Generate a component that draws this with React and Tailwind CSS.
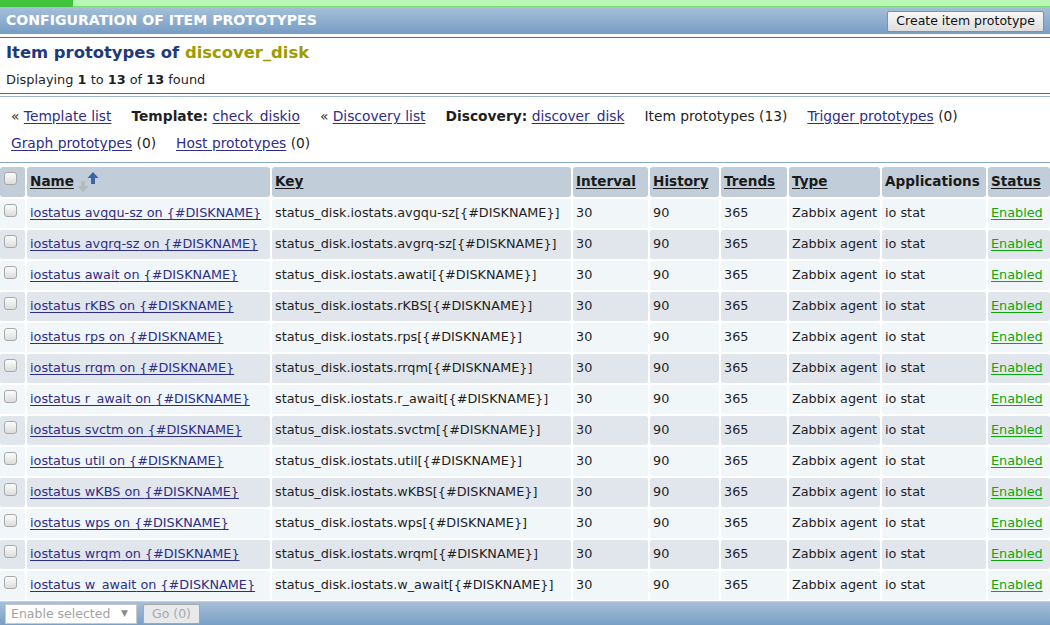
import React from 'react'

const rows = [
  ['avgqu-sz', 'avgqu-sz'],
  ['avgrq-sz', 'avgrq-sz'],
  ['await', 'awati'],
  ['rKBS', 'rKBS'],
  ['rps', 'rps'],
  ['rrqm', 'rrqm'],
  ['r_await', 'r_await'],
  ['svctm', 'svctm'],
  ['util', 'util'],
  ['wKBS', 'wKBS'],
  ['wps', 'wps'],
  ['wrqm', 'wrqm'],
  ['w_await', 'w_await'],
]

const cols = 'grid grid-cols-[25px_243px_299px_75px_69px_66px_91px_104px_62px] gap-x-[2px]'

function Checkbox() {
  return (
    <span className="block h-[13px] w-[13px] rounded-[3px] border border-[#a9a9a9] bg-gradient-to-b from-[#fdfdfd] to-[#dcdcdc]" />
  )
}

function SortArrows() {
  return (
    <svg width="22" height="20" viewBox="0 0 22 20" className="ml-[3px] inline-block">
      {/* gray down arrow */}
      <path d="M4 9h4v5h3.5L6 20 0.5 14H4z" fill="#b5b9bd" />
      {/* blue up arrow */}
      <path d="M16 0l5.5 6H18v6h-4V6h-3.5z" fill="#3d64a8" />
    </svg>
  )
}

function Th({ children, link = true }) {
  return (
    <div className="flex h-[30px] items-center whitespace-nowrap rounded-[3px] bg-[#c1cdd8] px-[3px] pb-[1px] text-[13.6px] font-bold text-[#1a1a1a]">
      {link ? <span className="underline underline-offset-2">{children}</span> : children}
    </div>
  )
}

function NavLink({ children }) {
  return <span className="text-[#2e2e86] underline underline-offset-2">{children}</span>
}

export default function App() {
  return (
    <div className="h-[625px] w-[1050px] overflow-hidden bg-white text-[12.8px] text-[#1f1f1f]" style={{ fontFamily: '"DejaVu Sans", Verdana, sans-serif' }}>
      {/* top status strip */}
      <div className="flex h-[7px]">
        <div className="w-[73px] bg-[#43c43f]" />
        <div className="flex-1 border-b border-[#7fdd78] bg-[#b9f8b4]" />
      </div>

      {/* page header bar */}
      <div className="flex h-[27px] items-center justify-between bg-gradient-to-b from-[#a6bfd9] to-[#779dc4] pl-[6px] pr-[6px]">
        <span className="pt-[1px] text-[14.1px] font-bold text-white">CONFIGURATION OF ITEM PROTOTYPES</span>
        <button className="mt-[1px] h-[21px] rounded-[2px] border border-[#8e8e8e] bg-gradient-to-b from-[#f8f8f8] to-[#dedede] px-[8px] text-[12.5px] text-[#111]">
          Create item prototype
        </button>
      </div>

      <div className="mt-[3px] border-t border-[#41709e]" />
      <div className="flex h-[55px] flex-col px-[6px] pt-[4px]">
        <div className="text-[16.4px] font-bold leading-[22px] text-[#1f3a78]">
          Item prototypes of <span className="text-[#9e9a00]">discover_disk</span>
        </div>
        <div className="mt-[8px] text-[12.9px] leading-[16px]">
          Displaying <b>1</b> to <b>13</b> of <b>13</b> found
        </div>
      </div>
      <div className="border-t border-[#41709e]" />
      <div className="mt-[2px] border-t border-[#9fb6cf]" />

      {/* navigation */}
      <div className="flex h-[65px] flex-wrap content-center gap-x-[20px] gap-y-[9px] px-[11px] text-[13.8px] leading-[18px]">
        <span>« <NavLink>Template list</NavLink></span>
        <span><b>Template:</b> <NavLink>check_diskio</NavLink></span>
        <span>« <NavLink>Discovery list</NavLink></span>
        <span><b>Discovery:</b> <NavLink>discover_disk</NavLink></span>
        <span>Item prototypes (13)</span>
        <span><NavLink>Trigger prototypes</NavLink> (0)</span>
        <span><NavLink>Graph prototypes</NavLink> (0)</span>
        <span><NavLink>Host prototypes</NavLink> (0)</span>
      </div>
      <div className="border-t border-[#8aa7c8]" />

      {/* table */}
      <div className="mt-[4px] flex flex-col gap-y-[2px]">
        <div className={cols}>
          <div className="flex h-[30px] items-start rounded-[3px] bg-[#c1cdd8] pl-[4px] pt-[5px]"><Checkbox /></div>
          <div className="flex h-[30px] items-center rounded-[3px] bg-[#c1cdd8] px-[3px] pb-[1px] text-[13.6px] font-bold text-[#1a1a1a]">
            <span className="underline underline-offset-2">Name</span>
            <SortArrows />
          </div>
          <Th>Key</Th>
          <Th>Interval</Th>
          <Th>History</Th>
          <Th>Trends</Th>
          <Th>Type</Th>
          <Th link={false}>Applications</Th>
          <Th>Status</Th>
        </div>
        {rows.map(([n, k], i) => {
          const bg = i % 2 === 0 ? 'bg-[#f1f6f9]' : 'bg-[#e1e6ed]'
          const cell = `flex h-[29px] items-center overflow-hidden whitespace-nowrap rounded-[2px] px-[3px] pb-[1px] ${bg}`
          return (
            <div key={n} className={cols}>
              <div className={`flex h-[29px] items-start rounded-[2px] pl-[4px] pt-[5px] ${bg}`}><Checkbox /></div>
              <div className={cell}><span className="text-[#2e2e86] underline underline-offset-2">iostatus {n} on {'{#DISKNAME}'}</span></div>
              <div className={cell}>status_disk.iostats.{k}[{'{#DISKNAME}'}]</div>
              <div className={cell}>30</div>
              <div className={cell}>90</div>
              <div className={cell}>365</div>
              <div className={cell}>Zabbix agent</div>
              <div className={cell}>io stat</div>
              <div className={cell}><span className="text-[#0ba70b] underline underline-offset-2">Enabled</span></div>
            </div>
          )
        })}
      </div>

      {/* footer action bar */}
      <div className="mt-[1px] flex h-[25px] items-center gap-[6px] border-t border-[#c6d0da] bg-gradient-to-b from-[#a6bfd9] to-[#779dc4] pl-[5px]">
        <div className="flex h-[20px] w-[132px] items-center justify-between border border-[#c9c9c9] bg-white pl-[5px] pr-[8px] text-[12.5px] text-[#a3a3a3]">
          <span>Enable selected</span>
          <span className="text-[9px] text-[#8c8c8c]">▼</span>
        </div>
        <div className="flex h-[20px] w-[57px] items-center justify-center rounded-[2px] border border-[#a8a8a8] bg-[#e7e9eb] text-[12.5px] text-[#a9a9a9]">
          Go (0)
        </div>
      </div>
    </div>
  )
}
